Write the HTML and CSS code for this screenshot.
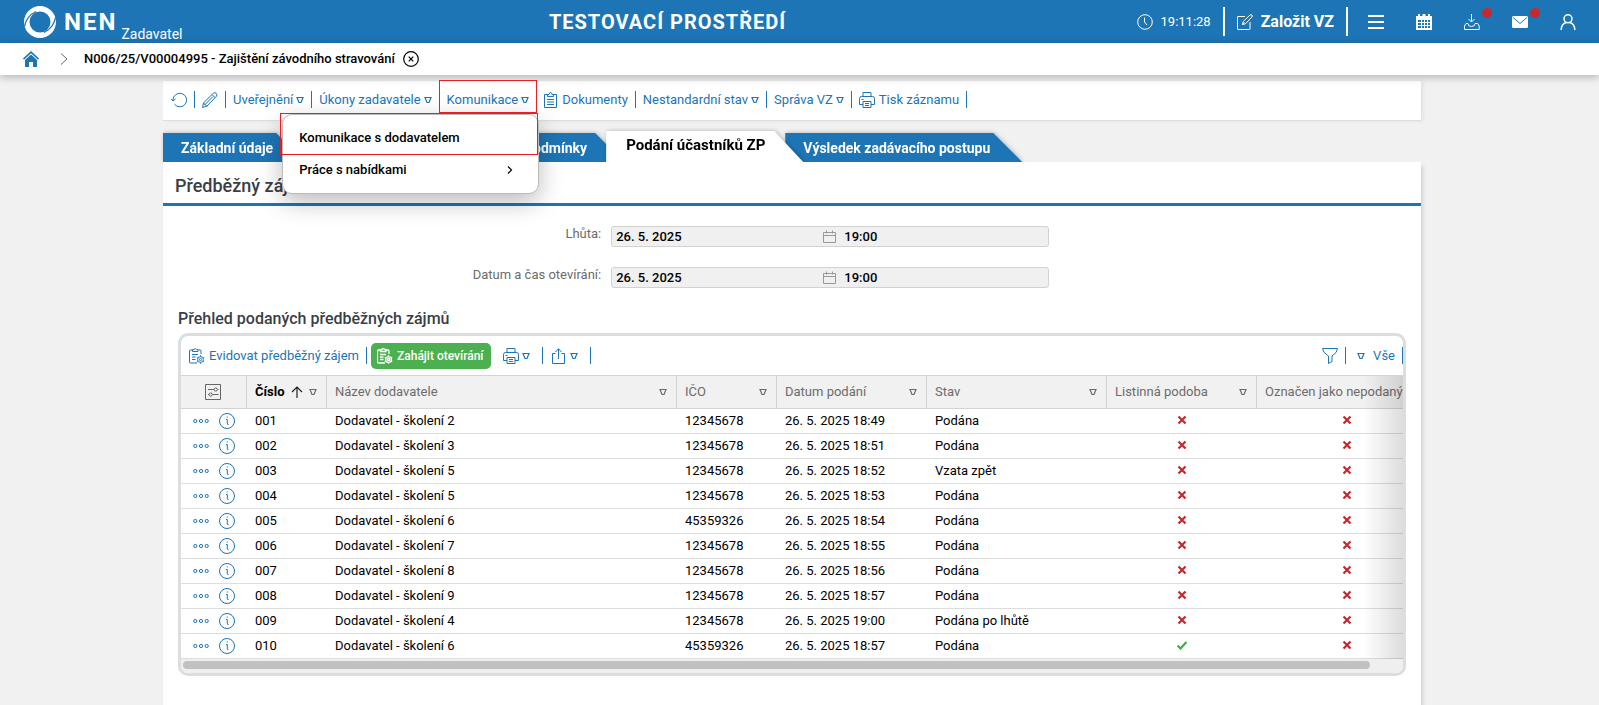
FILE: index.html
```html
<!DOCTYPE html>
<html lang="cs">
<head>
<meta charset="utf-8">
<title>NEN – Zadavatel</title>
<link rel="stylesheet" href="styles.css">
</head>
<body>
<svg class="sprite" aria-hidden="true">
  <symbol id="tri" viewBox="0 0 8 8"><path d="M1 1.5h6L5 6.5H3z"/></symbol>
  <symbol id="printer" viewBox="0 0 16 16"><path d="M4 4.500V.5h8v4M4 12.500H.5v-6q0-2 2-2h11q2 0 2 2v6H12M4 9.500h8v6H4zM6 11.500h4M6 13.500h4M2.500 7.500h2"/></symbol>
  <symbol id="clip" viewBox="0 0 14 16"><path d="M3.500 2.500h-3v13h12v-13h-3M3.500 4.500v-2h1.500q0-2 1.500-2t1.500 2h1.500v2zM3 7.500h7M3 10h7M3 12.500h7"/></symbol>
  <symbol id="clipgear" viewBox="0 0 16 16"><path d="M8 15H1.500q-1 0-1-1V3q0-1 1-1H3M9.500 2h1.500q1 0 1 1v3M3.500 3.500v-2h1.500q1.200-2 2.400 0H9v2zM3 6.500h6M3 9h3.500M3 11.500h3.500"/><circle cx="11.500" cy="11.500" r="2.900"/><circle cx="11.500" cy="11.500" r="1.100"/><path d="M11.500 7.200v1.400M11.500 14.400v1.400M7.800 9.400l1.200.7M14 12.900l1.200.7M7.800 13.600l1.200-.7M14 10.100l1.200-.7"/></symbol>
  <symbol id="share" viewBox="0 0 16 16"><path d="M4.500 5.500h-3v10h12v-10h-3M7.500 11V1M4.500 4l3-3.300 3 3.300"/></symbol>
  <symbol id="info" viewBox="0 0 16 16"><circle cx="8" cy="8" r="7.500"/><path d="M7 6.500h1.300v4.500q0 .7 1.200.5M7.700 4h1.100"/></symbol>
  <symbol id="dots" viewBox="0 0 16 16"><circle cx="2.300" cy="8" r="1.600"/><circle cx="8" cy="8" r="1.600"/><circle cx="13.700" cy="8" r="1.600"/></symbol>
  <symbol id="no" viewBox="0 0 10 10"><path d="M1.500 1.500l7 7M8.500 1.500l-7 7"/></symbol>
  <symbol id="yes" viewBox="0 0 10 10"><path d="M.5 5.500l3 3 6-6.500"/></symbol>
  <symbol id="cal" viewBox="0 0 14 14"><path d="M.5 2.500h12v10H.5zM.5 5.500h12M3.500.5v3M9.500.5v3"/></symbol>
</svg>

<header class="topbar">
  <a class="brand" href="#">
    <svg class="logo" viewBox="0 0 32 32" aria-hidden="true"><path fill="#fff" fill-rule="evenodd" d="M16 0a16 16 0 0 1 0 32a16 16 0 0 1 0-32zM16 5.500a10.500 10.500 0 0 0 0 21a10.500 10.500 0 0 0 0-21z"/><path fill="none" stroke="#1d75b5" stroke-width="1.300" d="M.5 20.500Q2.500 10 12 5.500M31.500 11.500Q29.500 22 20 26.500"/></svg>
    <span class="brand-name">NEN</span>
    <span class="brand-role">Zadavatel</span>
  </a>
  <h1 class="env">TESTOVACÍ PROSTŘEDÍ</h1>
  <div class="top-actions">
    <div class="clock"><svg class="ic" viewBox="0 0 16 16" aria-hidden="true"><circle cx="8" cy="8" r="7.300"/><path d="M7.500 3.500V8l2.500 3"/></svg><span>19:11:28</span></div>
    <button class="create"><svg class="ic" viewBox="0 0 16 16" aria-hidden="true"><path d="M8 2.500H1q-.5 0-.5.500v12q0 .5.500.5h11.500q.5 0 .5-.5V8M5.500 10.500l.7-3 6.800-6.500q1-.8 1.900.1t0 1.900L8.500 9.800zM5.500 10.500l2-2"/></svg>Založit VZ</button>
    <nav class="top-icons">
      <button aria-label="Menu"><svg class="ic thick" viewBox="0 0 16 16"><path d="M0 2h16M0 8h16M0 14h16"/></svg></button>
      <button aria-label="Kalendář"><svg viewBox="0 0 16 16"><path fill="#fff" fill-rule="evenodd" d="M0 2h2V0h2v2h2.500V0h3v2H12V0h2v2h2v14H0zM2 6v8h12V6z"/><path stroke="#fff" fill="none" d="M2 8.500h12M2 11.500h12M5.500 6v8M8.500 6v8M11.500 6v8"/></svg></button>
      <button aria-label="Stažené soubory"><svg class="ic" viewBox="0 0 16 16"><path d="M7.500 0v7.500M4.500 5l3 3 3-3M4 9.500H2L.5 12v3.500h14.700V12l-1.500-2.500H11q0 3-3.500 3T4 9.500"/></svg><span class="badge"></span></button>
      <button aria-label="Zprávy"><svg viewBox="0 0 16 16"><path fill="#fff" d="M1.500 2h13q1.500 0 1.500 1.500v9q0 1.500-1.500 1.500h-13Q0 14 0 12.500v-9Q0 2 1.500 2z"/><path fill="none" stroke="#1d75b5" d="M1 3.500l7 6 7-6"/></svg><span class="badge"></span></button>
      <button aria-label="Uživatel"><svg class="ic mid" viewBox="0 0 16 16"><circle cx="8" cy="4.800" r="4"/><path d="M1.200 16q0-6 4.800-7.500M14.800 16q0-6-4.800-7.500"/></svg></button>
    </nav>
  </div>
</header>

<nav class="crumbs" aria-label="Drobečková navigace">
  <a class="home" href="#" aria-label="Domů"><svg viewBox="0 0 16 16"><path fill="#1d75b5" d="M0 7.500L8 0l8 7.500-1 1.200L8 2.300 1 8.700z"/><path fill="#1d75b5" d="M2 9l6-5.500L14 9v7h-4v-5H6v5H2z"/></svg></a>
  <svg class="sep-chevron" viewBox="0 0 8 12" aria-hidden="true"><path d="M1 .5L7 6l-6 5.500"/></svg>
  <span class="crumb">N006/25/V00004995 - Zajištění závodního stravování</span>
  <button class="close" aria-label="Zavřít"><svg viewBox="0 0 16 16"><circle cx="8" cy="8" r="7.300"/><path d="M5.700 5.700l4.600 4.600M10.300 5.700l-4.600 4.600"/></svg></button>
</nav>

<main class="page">
  <div class="toolbar">
    <button class="tool" aria-label="Obnovit"><svg class="ic" viewBox="0 0 16 16"><path d="M2 8a6.800 6.800 0 1 1 1.500 4.300M0 6.800l2 2.200 2.500-2"/></svg></button>
    <button class="tool" aria-label="Upravit"><svg class="ic" viewBox="0 0 16 16"><path d="M.5 15.500l1-4.500L11.300 1.200q1.500-1.200 2.800 0t.4 3L5 14zM10 2.500l3.300 3.300M1.500 11L5 14.500M2.500 13L11 4.500"/></svg></button>
    <button class="tool">Uveřejnění<svg class="tri"><use href="#tri"/></svg></button>
    <button class="tool">Úkony zadavatele<svg class="tri"><use href="#tri"/></svg></button>
    <div class="menu">
      <button class="tool marked" aria-expanded="true">Komunikace<svg class="tri"><use href="#tri"/></svg></button>
      <div class="popup">
        <button class="option">Komunikace s dodavatelem</button>
        <button class="option">Práce s nabídkami<svg class="chev" viewBox="0 0 8 8"><path d="M2 .5L5.500 4 2 7.500"/></svg></button>
        <span class="marker"></span>
      </div>
    </div>
    <button class="tool"><svg class="ic lead narrow"><use href="#clip"/></svg>Dokumenty</button>
    <button class="tool">Nestandardní stav<svg class="tri"><use href="#tri"/></svg></button>
    <button class="tool">Správa VZ<svg class="tri"><use href="#tri"/></svg></button>
    <button class="tool"><svg class="ic lead"><use href="#printer"/></svg>Tisk záznamu</button>
  </div>

  <div class="tabs" role="tablist">
    <div class="tab"><button role="tab">Základní údaje</button></div>
    <div class="tab wide"><button role="tab">Zadávací podmínky</button></div>
    <div class="tab active"><button role="tab" aria-selected="true">Podání účastníků ZP</button></div>
    <div class="tab next"><button role="tab">Výsledek zadávacího postupu</button></div>
  </div>

  <section class="panel">
    <h2>Předběžný zájem</h2>
    <form class="fields">
      <label for="d1">Lhůta:</label>
      <div class="field"><input id="d1" value="26. 5. 2025" readonly><svg class="cal"><use href="#cal"/></svg><input aria-label="Lhůta – čas" value="19:00" readonly></div>
      <label for="d2">Datum a čas otevírání:</label>
      <div class="field"><input id="d2" value="26. 5. 2025" readonly><svg class="cal"><use href="#cal"/></svg><input aria-label="Otevírání – čas" value="19:00" readonly></div>
    </form>

    <h3>Přehled podaných předběžných zájmů</h3>
    <div class="grid">
      <div class="grid-bar">
        <button class="tool"><svg class="ic lead"><use href="#clipgear"/></svg>Evidovat předběžný zájem</button>
        <button class="go"><svg class="ic lead"><use href="#clipgear"/></svg>Zahájit otevírání</button>
        <button class="tool print" aria-label="Tisk"><svg class="ic"><use href="#printer"/></svg><svg class="tri"><use href="#tri"/></svg></button>
        <button class="tool export" aria-label="Export"><svg class="ic"><use href="#share"/></svg><svg class="tri"><use href="#tri"/></svg></button>
        <button class="tool filter" aria-label="Filtr"><svg class="ic" viewBox="0 0 16 16"><path d="M.5.5h15q0 4-5.500 7.500v5.500l-3.500 2V8Q.5 4.500.5.500z"/></svg></button>
        <button class="tool all"><svg class="tri"><use href="#tri"/></svg>Vše</button>
      </div>
      <div class="scroll">
        <table>
          <colgroup><col class="c-act"><col class="c-num"><col class="c-name"><col class="c-ico"><col class="c-date"><col class="c-state"><col class="c-paper"><col class="c-mark"></colgroup>
          <thead><tr>
            <th><button class="set" aria-label="Nastavení sloupců"><svg viewBox="0 0 16 16"><path d="M.5.5h15v15H.5zM3 5.500h6M12.500 5.500h1M3 10.500h1M7.500 10.500h6"/><circle cx="10.700" cy="5.500" r="1.600"/><circle cx="5.700" cy="10.500" r="1.600"/></svg></button></th>
            <th class="sorted"><div class="head"><span>Číslo</span><svg class="up" viewBox="0 0 12 12"><path d="M6 12V1M1 6l5-5 5 5"/></svg><svg class="tri"><use href="#tri"/></svg></div></th>
            <th><div class="head"><span>Název dodavatele</span><svg class="tri"><use href="#tri"/></svg></div></th>
            <th><div class="head"><span>IČO</span><svg class="tri"><use href="#tri"/></svg></div></th>
            <th><div class="head"><span>Datum podání</span><svg class="tri"><use href="#tri"/></svg></div></th>
            <th><div class="head"><span>Stav</span><svg class="tri"><use href="#tri"/></svg></div></th>
            <th><div class="head"><span>Listinná podoba</span><svg class="tri"><use href="#tri"/></svg></div></th>
            <th><div class="head"><span>Označen jako nepodaný</span></div></th>
          </tr></thead>
          <tbody id="rows"></tbody>
        </table>
        <div class="fade"></div>
      </div>
      <div class="track"><div class="thumb"></div></div>
    </div>
  </section>
</main>
<script src="rows.js"></script>
</body>
</html>
```

FILE: rows.js
```js
const bids = [
  ["001", "Dodavatel - školení 2", "12345678", "18:49", "Podána", false],
  ["002", "Dodavatel - školení 3", "12345678", "18:51", "Podána", false],
  ["003", "Dodavatel - školení 5", "12345678", "18:52", "Vzata zpět", false],
  ["004", "Dodavatel - školení 5", "12345678", "18:53", "Podána", false],
  ["005", "Dodavatel - školení 6", "45359326", "18:54", "Podána", false],
  ["006", "Dodavatel - školení 7", "12345678", "18:55", "Podána", false],
  ["007", "Dodavatel - školení 8", "12345678", "18:56", "Podána", false],
  ["008", "Dodavatel - školení 9", "12345678", "18:57", "Podána", false],
  ["009", "Dodavatel - školení 4", "12345678", "19:00", "Podána po lhůtě", false],
  ["010", "Dodavatel - školení 6", "45359326", "18:57", "Podána", true]
];
const flag = on => `<td class="flag"><svg class="${on ? "yes" : "no"}"><use href="#${on ? "yes" : "no"}"/></svg></td>`;
document.getElementById("rows").innerHTML = bids.map(([num, name, ico, time, state, paper]) => `<tr>
  <td><div class="acts"><button aria-label="Akce"><svg class="ic"><use href="#dots"/></svg></button><button aria-label="Detail"><svg class="ic"><use href="#info"/></svg></button></div></td>
  <td>${num}</td><td>${name}</td><td>${ico}</td><td>26. 5. 2025 ${time}</td><td>${state}</td>${flag(paper)}${flag(false)}
</tr>`).join("");
```

FILE: styles.css
```css
:root {
  --blue: #1d75b5;
  --red: #e81e25;
  --line: #dcdddf;
  --soft: #f1f1f1;
}
* { box-sizing: border-box; }
body {
  margin: 0;
  min-height: 100vh;
  display: flex;
  flex-direction: column;
  background: var(--soft);
  font: 13px/16px Roboto, "Liberation Sans", sans-serif;
  color: #000;
}
button {
  border: 0;
  padding: 0;
  background: none;
  color: inherit;
  font: inherit;
  display: flex;
  align-items: center;
}
svg { display: block; flex: none; }
.sprite { position: absolute; width: 0; height: 0; }
.ic { width: 16px; height: 16px; fill: none; stroke: currentColor; stroke-width: 1; }
.ic.mid { stroke-width: 1.5; }
.ic.thick { stroke-width: 2; }
.ic.narrow { width: 14px; }
.tri { width: 8px; height: 8px; fill: none; stroke: currentColor; stroke-width: 1.2; }

/* top bar */
.topbar {
  height: 43px;
  display: flex;
  justify-content: space-between;
  align-items: center;
  padding: 0 23px 0 24px;
  background: var(--blue);
  color: #fff;
}
.brand { display: flex; align-items: center; padding-right: 16px; color: #fff; text-decoration: none; }
.logo { width: 32px; height: 32px; }
.brand-name { margin-left: 8px; font-size: 24px; font-weight: 700; letter-spacing: 2px; }
.brand-role { align-self: flex-end; margin-left: 4px; font-size: 14px; line-height: 8px; }
.env { margin: 0; font-size: 20px; line-height: 24px; font-weight: 700; letter-spacing: 1px; }
.top-actions { display: flex; justify-content: flex-end; align-items: center; }
.clock { display: flex; align-items: center; gap: 8px; padding-right: 12px; }
.create {
  height: 29px;
  gap: 8px;
  padding: 0 12px;
  border: solid #fff;
  border-width: 0 2px;
  font-size: 16px;
  font-weight: 700;
}
.top-icons { display: flex; gap: 32px; padding-left: 20px; }
.top-icons button { position: relative; }
.top-icons svg { width: 16px; height: 16px; }
.badge {
  position: absolute;
  top: -6px;
  right: -12px;
  width: 10px;
  height: 10px;
  border-radius: 50%;
  background: #c62a2e;
}

/* breadcrumbs */
.crumbs {
  height: 32px;
  display: flex;
  align-items: center;
  padding: 0 23px;
  background: #fff;
  box-shadow: 0 2px 8px #0004;
  z-index: 1;
}
.home svg, .close svg { width: 16px; height: 16px; }
.sep-chevron { width: 8px; height: 12px; margin: 0 16px 0 21px; fill: none; stroke: #666; }
.crumb { font-weight: 500; }
.close { margin-left: 8px; }
.close svg { fill: none; stroke: #000; stroke-width: 1.2; }

/* page */
.page {
  flex: 1;
  display: flex;
  flex-direction: column;
  margin: 0 178px 0 163px;
  padding-top: 6px;
}
.toolbar {
  height: 40px;
  display: flex;
  align-items: center;
  padding: 0 0 2px 1px;
  background: #fff;
  border-bottom: 1px solid #dedede;
  box-shadow: 2px 0 4px #0001;
}
.tool {
  height: 17px;
  padding: 0 7px;
  border-right: 1px solid var(--blue);
  color: var(--blue);
  white-space: nowrap;
}
.tool .tri { margin-left: 3px; }
.lead { margin-right: 4px; }
.menu { position: relative; }
.marked::after {
  content: "";
  position: absolute;
  inset: -11px 0 -5px -1px;
  border: 1px solid var(--red);
  z-index: 4;
}
.popup {
  position: absolute;
  z-index: 3;
  top: 23px;
  right: -2px;
  width: 257px;
  padding: 7px 0;
  border: 1px solid #bbb;
  border-radius: 10px;
  background: #fff;
  box-shadow: 0 8px 24px #0004;
}
.option {
  width: 100%;
  height: 32px;
  padding: 0 24px 0 16px;
  justify-content: space-between;
  font-weight: 500;
}
.chev { width: 8px; height: 8px; fill: none; stroke: #000; stroke-width: 1.2; }
.marker { position: absolute; top: -2px; left: -3px; right: 0; height: 42px; border: 1px solid var(--red); }

/* tabs */
.tabs { display: flex; align-items: flex-end; padding-top: 10px; }
.tab { filter: drop-shadow(1px 0 2px #0004); margin-right: -18px; }
.tab button {
  height: 29px;
  padding: 0 32px 0 18px;
  background: var(--blue);
  color: #fff;
  font-size: 14px;
  font-weight: 700;
  white-space: nowrap;
  clip-path: polygon(0 0, calc(100% - 29px) 0, 100% 100%, 0 100%);
}
.tab.wide { width: 337px; }
.tab.wide button { width: 100%; justify-content: flex-end; padding-right: 37px; }
.tab.active { z-index: 1; }
.tab.active button {
  height: 31px;
  padding: 0 38px 4px 20px;
  background: #fff;
  color: #000;
  font-size: 15px;
  font-weight: 700;
}

/* panel */
.panel { flex: 1; padding-bottom: 32px; background: #fff; box-shadow: 2px 4px 4px #0002; z-index: 1; }
h2 {
  margin: 0;
  padding: 14px 12px 7px;
  border-bottom: 3px solid var(--blue);
  font-size: 18px;
  line-height: 20px;
  font-weight: 500;
  color: #3a3e45;
}
.fields {
  display: grid;
  grid-template-columns: 35% 35%;
  gap: 20px 10px;
  padding: 20px 6px 0 0;
}
.fields label { text-align: right; color: #6c6c6c; }
.field {
  height: 21px;
  display: flex;
  align-items: center;
  border: 1px solid #d2d2d2;
  border-radius: 3px;
  background: #f0f0f0;
}
.field input {
  flex: 1;
  min-width: 0;
  padding: 0 4px;
  border: 0;
  background: none;
  font: 500 13px/16px Roboto, sans-serif;
}
.cal { width: 14px; height: 14px; margin: 0 3px; fill: none; stroke: #999; }
h3 { margin: 0; padding: 21px 15px 4px; font-size: 16px; line-height: 20px; font-weight: 500; color: #3a3e45; }
.grid { margin: 0 15px; border: 3px solid var(--line); border-radius: 10px; overflow: hidden; }
.grid-bar { height: 39px; display: flex; align-items: center; padding-left: 1px; }
.go {
  height: 26px;
  margin-left: 4px;
  padding: 0 8px 0 6px;
  border-radius: 5px;
  background: #4caf50;
  color: #fff;
  font-size: 12px;
  font-weight: 500;
}
.go .ic { stroke-width: 1.3; }
.grid-bar .print { padding: 0 12px; }
.grid-bar .export { padding: 0 12px 0 8px; }
.filter { margin-left: auto; }
.all .tri { margin: 0 8px 0 4px; }
.scroll { position: relative; overflow: hidden; }
table { width: 1256px; table-layout: fixed; border-collapse: separate; border-spacing: 0; }
.c-act { width: 66px; }
.c-num { width: 80px; }
.c-name { width: 350px; }
.c-ico { width: 100px; }
.c-date, .c-paper { width: 150px; }
.c-state, .c-mark { width: 180px; }
th {
  height: 34px;
  padding: 0 9px 0 8px;
  border: solid #d3d3d3;
  border-width: 1px 1px 1px 0;
  background: #f1f1f1;
  color: #6c6c6c;
  font-weight: 400;
  text-align: left;
}
.head { display: flex; align-items: center; justify-content: space-between; white-space: nowrap; }
.sorted span { color: #000; font-weight: 700; }
.up { width: 12px; height: 12px; fill: none; stroke: #222; stroke-width: 1.2; }
.set { margin: 0 auto; }
.set svg { width: 16px; height: 16px; fill: none; stroke: #666; }
td { height: 25px; padding: 0 8px; border-bottom: 1px solid var(--line); white-space: nowrap; }
.acts { display: flex; gap: 10px; padding-left: 4px; color: var(--blue); }
td.flag { padding-bottom: 2px; }
.flag svg { width: 10px; height: 10px; margin: 0 auto; fill: none; stroke-width: 2.2; }
.flag .no { stroke: #c8282c; }
.flag .yes { stroke: #35b535; }
.fade {
  position: absolute;
  inset: 1px 0 0 auto;
  width: 40px;
  background: linear-gradient(to right, #0000, #0002);
}
.track { padding: 2px 3px 4px 2px; background: #efefef; }
.thumb { width: 97.5%; height: 8px; border-radius: 4px; background: #c1c1c1; }
```
